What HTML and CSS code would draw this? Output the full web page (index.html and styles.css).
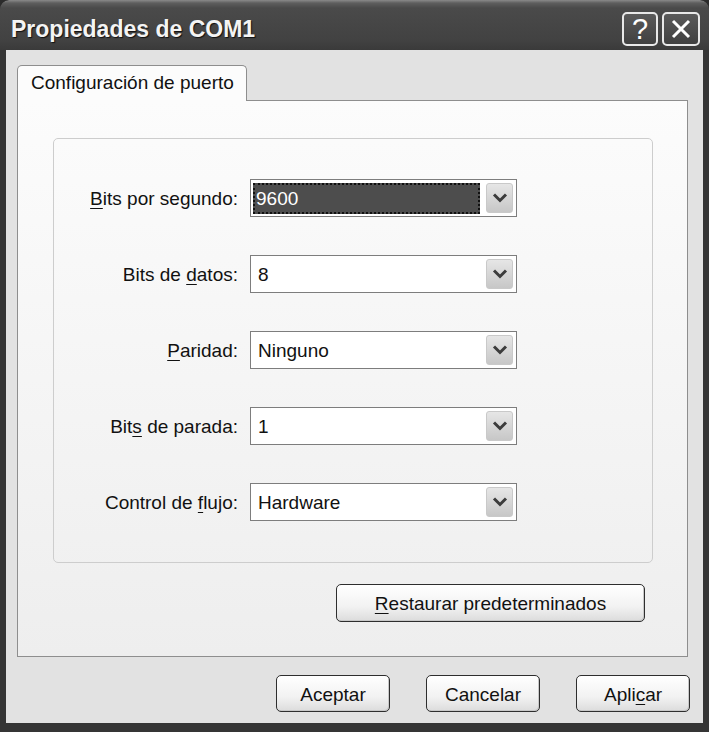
FILE: index.html
```html
<!DOCTYPE html>
<html lang="es">
<head>
<meta charset="utf-8">
<title>Propiedades de COM1</title>
<link rel="stylesheet" href="styles.css">
</head>
<body>
<div class="window">
  <div class="titlebar">
    <span class="title">Propiedades de COM1</span>
    <div class="caption-buttons">
      <span class="cap-btn help">?</span>
      <span class="cap-btn close">
        <svg width="24" height="24" viewBox="0 0 24 24"><path d="M4 4 L20 20 M20 4 L4 20" stroke="#fff" stroke-width="3" fill="none"/></svg>
      </span>
    </div>
  </div>
  <div class="client">
    <div class="tabs">
      <div class="tab">Configuración de puerto</div>
    </div>
    <div class="panel">
      <div class="group">
        <div class="grid">
          <label class="lbl"><u>B</u>its por segundo:</label>
          <div class="combo focused"><span class="value"><span class="sel">9600</span></span><span class="arrow"><svg width="16" height="12" viewBox="0 0 16 12"><path d="M2 2.5 L8 8.5 L14 2.5" stroke="#3c3c3c" stroke-width="3" fill="none"/></svg></span></div>

          <label class="lbl">Bits de <u>d</u>atos:</label>
          <div class="combo"><span class="value">8</span><span class="arrow"><svg width="16" height="12" viewBox="0 0 16 12"><path d="M2 2.5 L8 8.5 L14 2.5" stroke="#3c3c3c" stroke-width="3" fill="none"/></svg></span></div>

          <label class="lbl"><u>P</u>aridad:</label>
          <div class="combo"><span class="value">Ninguno</span><span class="arrow"><svg width="16" height="12" viewBox="0 0 16 12"><path d="M2 2.5 L8 8.5 L14 2.5" stroke="#3c3c3c" stroke-width="3" fill="none"/></svg></span></div>

          <label class="lbl">Bit<u>s</u> de parada:</label>
          <div class="combo"><span class="value">1</span><span class="arrow"><svg width="16" height="12" viewBox="0 0 16 12"><path d="M2 2.5 L8 8.5 L14 2.5" stroke="#3c3c3c" stroke-width="3" fill="none"/></svg></span></div>

          <label class="lbl">Control de <u>f</u>lujo:</label>
          <div class="combo"><span class="value">Hardware</span><span class="arrow"><svg width="16" height="12" viewBox="0 0 16 12"><path d="M2 2.5 L8 8.5 L14 2.5" stroke="#3c3c3c" stroke-width="3" fill="none"/></svg></span></div>
        </div>
      </div>
      <div class="restore-row">
        <button class="btn restore"><u>R</u>estaurar predeterminados</button>
      </div>
    </div>
    <div class="actions">
      <button class="btn action">Aceptar</button>
      <button class="btn action">Cancelar</button>
      <button class="btn action">Apli<u>c</u>ar</button>
    </div>
  </div>
</div>
</body>
</html>
```

FILE: styles.css
```css
* { box-sizing: border-box; }
html, body { margin: 0; padding: 0; background: #2b2b2b; }
.window {
  width: 709px;
  height: 732px;
  display: flex;
  flex-direction: column;
  background: #353535;
  padding: 0 6px 9px 6px;
  border-radius: 9px 9px 0 0;
  overflow: hidden;
  font-family: "Liberation Sans", Arial, sans-serif;
}
.titlebar {
  height: 50px;
  margin: 0 -6px;
  display: flex;
  align-items: center;
  justify-content: space-between;
  padding: 0 9px 0 11px;
  background: linear-gradient(#8a8a8a 0px, #5e5e5e 3px, #4a4a4a 8px, #424242 40px, #3a3a3a 50px);
  border-radius: 9px 9px 0 0;
}
.title {
  color: #f4f4f4;
  font-weight: bold;
  font-size: 23px;
  padding-top: 8px;
  text-shadow: 1px 1px 1px #111;
}
.caption-buttons {
  display: flex;
  gap: 4px;
  padding-top: 8px;
}
.cap-btn {
  width: 36px;
  height: 34px;
  border: 2px solid #e8e8e8;
  border-radius: 5px;
  background: linear-gradient(#5a5a5a, #404040);
  display: flex;
  align-items: center;
  justify-content: center;
  color: #fff;
}
.cap-btn.close { width: 38px; }
.help { font-size: 29px; font-weight: normal; line-height: 1; }
.client {
  flex: 1;
  background: #e2e2e2;
  padding: 15px 15px 11px 11px;
  display: flex;
  flex-direction: column;
}
.tabs { display: flex; height: 35px; }
.tab {
  width: 230px;
  height: 36px;
  background: #fcfcfc;
  border: 1px solid #8e8e8e;
  border-bottom: none;
  border-radius: 5px 5px 0 0;
  font-size: 19px;
  color: #111;
  padding: 6px 0 0 13px;
  position: relative;
  z-index: 1;
}
.panel {
  height: 557px;
  border: 1px solid #8e8e8e;
  background: linear-gradient(#fcfcfc, #eeeeee);
  padding: 37px 34px 0 35px;
  display: flex;
  flex-direction: column;
}
.group {
  height: 425px;
  border: 1px solid #cdcdcd;
  border-radius: 5px;
  padding-top: 40px;
}
.grid {
  display: grid;
  grid-template-columns: 184px 267px;
  column-gap: 12px;
  row-gap: 38px;
  grid-auto-rows: 38px;
}
.lbl {
  font-size: 19px;
  color: #111;
  text-align: right;
  align-self: center;
  padding-top: 1px;
}
.lbl u { text-underline-offset: 3px; }
.combo {
  border: 1px solid #7d7d7d;
  background: #fff;
  display: flex;
  align-items: center;
  padding: 0 3px 0 2px;
}
.value {
  flex: 1;
  font-size: 19px;
  color: #111;
  padding-left: 5px;
  padding-top: 1px;
}
.focused .value { padding-left: 0; padding-top: 0; margin-right: 6px; }
.sel {
  display: block;
  height: 31px;
  background: #4d4d4d;
  color: #fff;
  outline: 2px dotted #111;
  outline-offset: -2px;
  padding: 5px 0 0 3px;
}
.arrow {
  width: 27px;
  height: 30px;
  border: 1px solid #c9c9c9;
  border-radius: 3px;
  background: linear-gradient(#e6e6e6, #c7c7c7);
  display: flex;
  align-items: center;
  justify-content: center;
}
.restore-row {
  display: flex;
  justify-content: flex-end;
  padding: 21px 8px 0 0;
}
.btn {
  font-family: "Liberation Sans", Arial, sans-serif;
  font-size: 19px;
  color: #111;
  border: 1px solid #2e2e2e;
  border-radius: 5px;
  background: linear-gradient(#ffffff, #f2f2f2 60%, #dcdcdc);
  box-shadow: inset -1px -1px 0 #c8c8c8;
  padding: 2px 0 0 0;
}
.btn u { text-underline-offset: 3px; }
.restore { width: 309px; height: 38px; }
.actions {
  display: flex;
  justify-content: flex-end;
  gap: 36px;
  margin-top: 18px;
  margin-right: -2px;
}
.action { width: 114px; height: 37px; }
```
